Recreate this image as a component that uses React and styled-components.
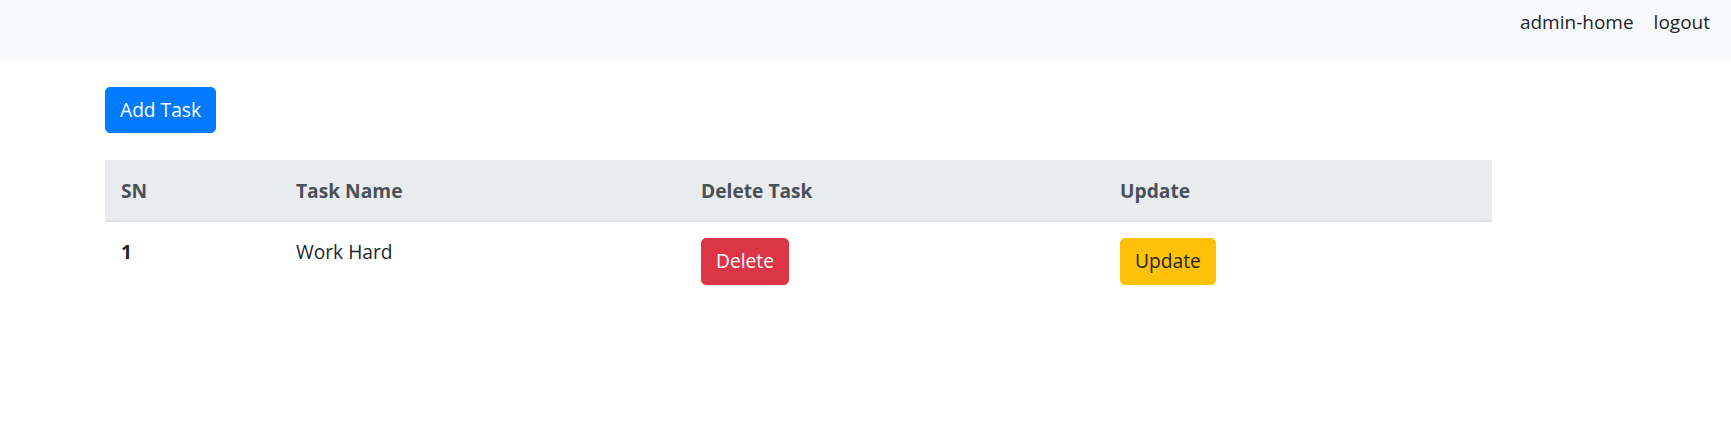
import React from 'react'
import styled, { createGlobalStyle } from 'styled-components'

const GlobalStyle = createGlobalStyle`
  body {
    margin: 0;
    background: #fff;
    font-family: "Open Sans", "Liberation Sans", sans-serif;
    font-size: 19.2px;
    line-height: 1.5;
    color: #212529;
  }
`

const tasks = [{ id: 1, name: 'Work Hard' }]

const App = () => {
  return (
    <>
      <GlobalStyle />
      <Navbar>
        <NavLink>admin-home</NavLink>
        <NavLink>logout</NavLink>
      </Navbar>
      <Main>
        <Button variant="primary">Add Task</Button>
        <Table>
          <colgroup>
            <col style={{ width: 175 }} />
            <col style={{ width: 405 }} />
            <col style={{ width: 419 }} />
            <col />
          </colgroup>
          <thead>
            <tr>
              <Th>SN</Th>
              <Th>Task Name</Th>
              <Th>Delete Task</Th>
              <Th>Update</Th>
            </tr>
          </thead>
          <tbody>
            {tasks.map((t, i) => (
              <tr key={t.id}>
                <Td bold>{i + 1}</Td>
                <Td>{t.name}</Td>
                <Td>
                  <Button variant="danger">Delete</Button>
                </Td>
                <Td>
                  <Button variant="warning">Update</Button>
                </Td>
              </tr>
            ))}
          </tbody>
        </Table>
      </Main>
    </>
  )
}

const Navbar = styled.nav`
  display: flex;
  justify-content: flex-end;
  align-items: flex-start;
  gap: 20px;
  height: 62px;
  box-sizing: border-box;
  padding: 8px 21px 0 0;
  background: #f8f9fa;
`

const NavLink = styled.a`
  color: #212529;
  font-size: 19px;
  cursor: pointer;
`

const Main = styled.main`
  padding: 25px 0 0 105px;
  display: flex;
  flex-direction: column;
  align-items: flex-start;
  gap: 27px;
`

const colors = {
  primary: { bg: '#007bff', fg: '#fff' },
  danger: { bg: '#dc3545', fg: '#fff' },
  warning: { bg: '#ffc107', fg: '#212529' },
}

const Button = styled.button`
  font-family: inherit;
  font-size: 19.2px;
  line-height: 1.5;
  padding: 8px 14px 7.6px;
  border: 1px solid ${(p) => colors[p.variant].bg};
  border-radius: 5px;
  background: ${(p) => colors[p.variant].bg};
  color: ${(p) => colors[p.variant].fg};
  cursor: pointer;
`

const Table = styled.table`
  width: 1387px;
  table-layout: fixed;
  border-collapse: collapse;
  color: #212529;
`

const Th = styled.th`
  box-sizing: border-box;
  text-align: left;
  padding: 17px 16px 14px;
  background: #e9ecef;
  color: #495057;
  font-weight: 700;
  border-bottom: 2px solid #dee2e6;
  vertical-align: bottom;
`

const Td = styled.td`
  padding: 16px 16px 15px;
  vertical-align: top;
  font-weight: ${(p) => (p.bold ? 700 : 400)};
`

export default App
